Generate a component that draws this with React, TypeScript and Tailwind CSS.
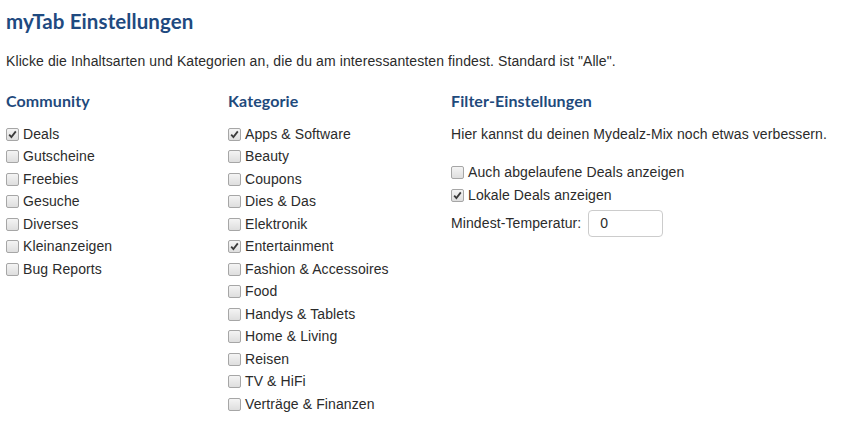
import React from 'react'

const community = [
  { label: 'Deals', checked: true },
  { label: 'Gutscheine', checked: false },
  { label: 'Freebies', checked: false },
  { label: 'Gesuche', checked: false },
  { label: 'Diverses', checked: false },
  { label: 'Kleinanzeigen', checked: false },
  { label: 'Bug Reports', checked: false },
]

const kategorie = [
  { label: 'Apps & Software', checked: true },
  { label: 'Beauty', checked: false },
  { label: 'Coupons', checked: false },
  { label: 'Dies & Das', checked: false },
  { label: 'Elektronik', checked: false },
  { label: 'Entertainment', checked: true },
  { label: 'Fashion & Accessoires', checked: false },
  { label: 'Food', checked: false },
  { label: 'Handys & Tablets', checked: false },
  { label: 'Home & Living', checked: false },
  { label: 'Reisen', checked: false },
  { label: 'TV & HiFi', checked: false },
  { label: 'Verträge & Finanzen', checked: false },
]

function Box({ checked }: { checked: boolean }) {
  return (
    <span className="w-[13px] h-[13px] rounded-[2px] border border-[#a6a6a6] bg-gradient-to-b from-[#f4f4f4] to-[#dedede] flex items-center justify-center flex-shrink-0">
      {checked && (
        <svg width="9" height="9" viewBox="0 0 9 9">
          <path d="M1.2 4.6 L3.4 7 L7.8 1.4" fill="none" stroke="#3a3a3a" strokeWidth="1.8" />
        </svg>
      )}
    </span>
  )
}

function CheckRow({ label, checked }: { label: string; checked: boolean }) {
  return (
    <label className="flex items-center h-[22.5px] gap-[4px]">
      <Box checked={checked} />
      <span>{label}</span>
    </label>
  )
}

const heading = "text-[16px] leading-[20px] font-bold text-[#1f4a7c] font-['Lato',sans-serif] tracking-[0.1px]"

export default function App() {
  return (
    <div className="bg-white min-h-[428px] px-[6px] text-[14px] text-[#2b2b2b] tracking-[0.1px] font-['Liberation_Sans',Arial,sans-serif]">
      <h1 className="pt-[9px] text-[20.5px] leading-[24px] font-bold text-[#1f4a80] font-['Lato',sans-serif]">
        myTab Einstellungen
      </h1>
      <p className="mt-[18px] leading-[20px]">
        Klicke die Inhaltsarten und Kategorien an, die du am interessantesten findest. Standard ist "Alle".
      </p>

      <div className="mt-[20px] grid grid-cols-[222px_223px_1fr]">
        <div>
          <h2 className={heading}>Community</h2>
          <div className="mt-[12px]">
            {community.map((c) => (
              <CheckRow key={c.label} label={c.label} checked={c.checked} />
            ))}
          </div>
        </div>

        <div>
          <h2 className={heading}>Kategorie</h2>
          <div className="mt-[12px]">
            {kategorie.map((c) => (
              <CheckRow key={c.label} label={c.label} checked={c.checked} />
            ))}
          </div>
        </div>

        <div>
          <h2 className={heading}>Filter-Einstellungen</h2>
          <p className="mt-[12px] h-[22.5px] flex items-center">
            Hier kannst du deinen Mydealz-Mix noch etwas verbessern.
          </p>
          <div className="mt-[16px]">
            <CheckRow label="Auch abgelaufene Deals anzeigen" checked={false} />
            <CheckRow label="Lokale Deals anzeigen" checked={true} />
          </div>
          <div className="mt-[3px] flex items-center gap-[7px]">
            <span>Mindest-Temperatur:</span>
            <div className="w-[75px] h-[27px] border border-[#ccc] rounded-[4px] pl-[11px] flex items-center">
              0
            </div>
          </div>
        </div>
      </div>
    </div>
  )
}
